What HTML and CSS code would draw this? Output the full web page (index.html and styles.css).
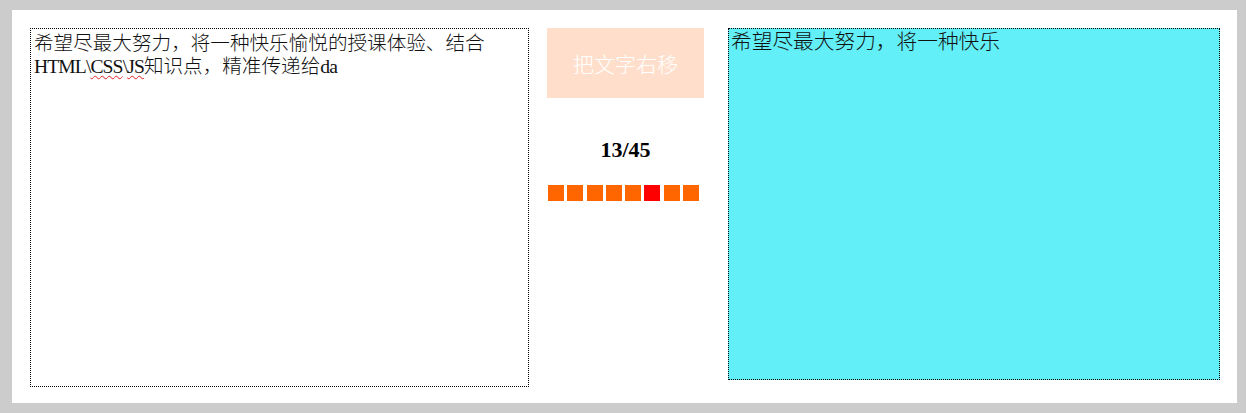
FILE: index.html
```html
<!DOCTYPE html>
<html lang="zh">
<head>
<meta charset="utf-8">
<title>把文字右移</title>
<link rel="stylesheet" href="styles.css">
</head>
<body>
<div class="frame">
  <div class="source">希望尽最大努力，将一种快乐愉悦的授课体验、结合<span class="latin">HTML\<span class="spell">CSS</span>\<span class="spell">JS</span></span>知识点，精准传递给<span class="latin">da</span></div>
  <div class="controls">
    <button class="move-btn" type="button">把文字右移</button>
    <div class="counter">13/45</div>
    <div class="dots">
      <span class="dot"></span>
      <span class="dot"></span>
      <span class="dot"></span>
      <span class="dot"></span>
      <span class="dot"></span>
      <span class="dot active"></span>
      <span class="dot"></span>
      <span class="dot"></span>
    </div>
  </div>
  <div class="target">希望尽最大努力，将一种快乐</div>
</div>
</body>
</html>
```

FILE: styles.css
```css
html, body {
  margin: 0;
  padding: 0;
  background: #fff;
}

.frame {
  box-sizing: border-box;
  width: 1246px;
  height: 413px;
  border-style: solid;
  border-color: #cccccc;
  border-width: 10px 9px 10px 12px;
  padding: 18px 0 0 18px;
  display: flex;
  align-items: flex-start;
  font-family: "Liberation Serif", "Noto Sans CJK SC", serif;
}

.source {
  box-sizing: border-box;
  width: 499px;
  height: 359px;
  border: 1px dotted #000;
  padding: 3px 3px;
  font-size: 19.6px;
  line-height: 23px;
  font-weight: 300;
  color: #111;
}

.latin {
  font-family: "Liberation Serif", serif;
  font-weight: normal;
  letter-spacing: -0.9px;
}

.spell {
  text-decoration: underline wavy #e02020;
  text-decoration-thickness: 1px;
  text-underline-offset: 2px;
}

.controls {
  width: 157px;
  margin-left: 18px;
  display: flex;
  flex-direction: column;
}

.move-btn {
  width: 157px;
  height: 70px;
  border: none;
  margin: 0;
  padding: 0;
  background: #ff6600;
  color: #fff;
  opacity: 0.2;
  font-family: "Noto Sans CJK SC", sans-serif;
  font-weight: 300;
  font-size: 21px;
}

.counter {
  margin-top: 40px;
  height: 24px;
  line-height: 24px;
  text-align: center;
  font-size: 22px;
  font-weight: bold;
  color: #000;
}

.dots {
  margin-top: 23px;
  margin-left: 1px;
  display: flex;
  gap: 3.3px;
}

.dot {
  width: 16px;
  height: 16px;
  background: #ff6600;
}

.dot.active {
  background: #ff0000;
}

.target {
  box-sizing: border-box;
  width: 492px;
  height: 352px;
  margin-left: 24px;
  border: 1px dotted #000;
  background: #63eff7;
  padding: 2px 2px;
  font-size: 20.7px;
  line-height: 23px;
  font-weight: 300;
  color: #111;
}
```
